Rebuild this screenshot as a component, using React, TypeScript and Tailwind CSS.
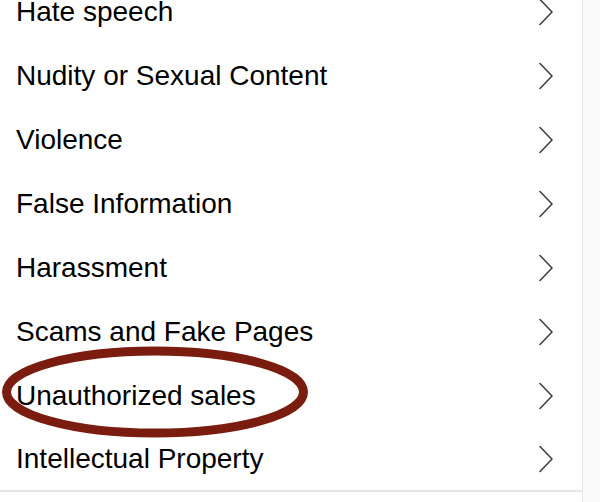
const items = [
  'Hate speech',
  'Nudity or Sexual Content',
  'Violence',
  'False Information',
  'Harassment',
  'Scams and Fake Pages',
  'Unauthorized sales',
  'Intellectual Property',
]

function Chevron() {
  return (
    <svg width="16" height="28" viewBox="0 0 16 28" fill="none" className="shrink-0">
      <path d="M2 1.5 L14 14 L2 26.5" stroke="#3b404a" strokeWidth="1.6" strokeLinecap="round" strokeLinejoin="round" />
    </svg>
  )
}

export default function App() {
  return (
    <div
      className="w-[600px] h-[502px] flex overflow-hidden bg-white text-black"
      style={{ fontFamily: '"Liberation Sans", Arial, sans-serif' }}
    >
      <div className="w-[582px] flex flex-col">
        <ul className="-mt-[20px] relative">
          {items.map((label, i) => (
            <li
              key={label}
              className={`flex items-center justify-between pl-4 pr-[28px] ${i === items.length - 1 ? 'h-[62px]' : 'h-16'}`}
            >
              <span className="text-[28px] leading-8">{label}</span>
              <Chevron />
            </li>
          ))}
          <svg
            className="absolute left-0 top-[366px] pointer-events-none"
            width="320"
            height="100"
            viewBox="0 0 320 100"
          >
            <ellipse cx="155" cy="46" rx="148.5" ry="41" fill="none" stroke="#7a1d10" strokeWidth="9" />
          </svg>
        </ul>
        <div className="h-[2px] bg-[#e6e6e6]" />
      </div>
      <div className="flex-1 border-l border-[#e4e4e4] bg-[#fafafa]" />
    </div>
  )
}
